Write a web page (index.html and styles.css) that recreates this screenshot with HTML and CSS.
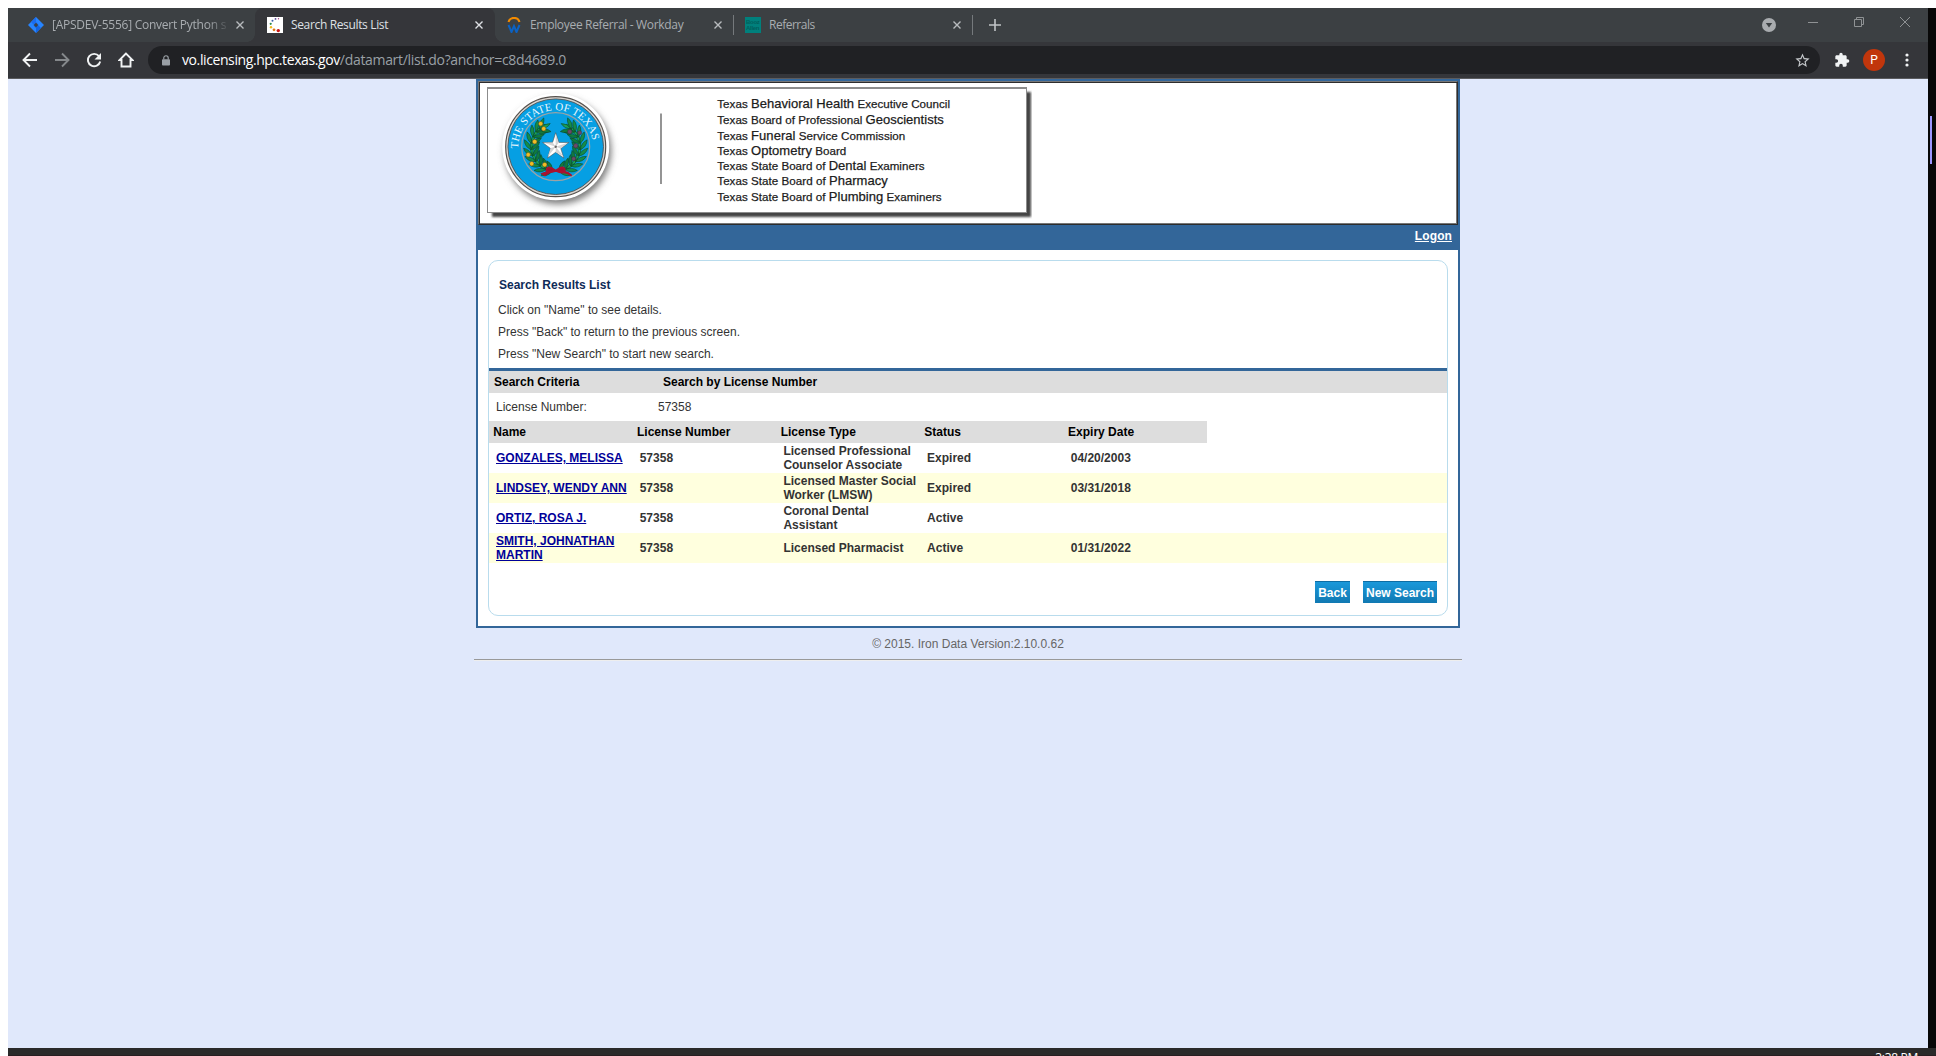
FILE: index.html
```html
<!DOCTYPE html>
<html lang="en">
<head>
<meta charset="utf-8">
<title>Search Results List</title>
<link rel="stylesheet" href="styles.css">
</head>
<body>
<div class="desktop">
  <div class="screen">
    <div class="window">
      <div class="tabstrip">
        <div class="tab tab-first">
          <svg class="favicon" viewBox="0 0 16 16"><path d="M8 0l8 8-8 8-8-8z" fill="#2684ff"/><path d="M8 0L3 5l5 5 2.500-2.500L8 5z" fill="#1a6cf0"/><path d="M8 16l5-5-5-5-2.500 2.500L8 11z" fill="#1464e0"/><path d="M8 5.800L10.200 8 8 10.200 5.800 8z" fill="#3c4043"/></svg>
          <span class="tab-title fade t1">[APSDEV-5556] Convert Python s</span>
          <svg class="close" viewBox="0 0 8 8"><path d="M.5.5l7 7M7.500.5l-7 7"/></svg>
        </div>
        <div class="tab tab-active">
          <svg class="favicon" viewBox="0 0 16 16"><path fill="#fff" d="M0 0h16v16H0z"/><circle cx="11.500" cy="1.700" r=".7" fill="#a04080"/><circle cx="8.500" cy="1.900" r=".9" fill="#5a4a9a"/><circle cx="5.500" cy="3.700" r="1" fill="#3c5fa8"/><circle cx="3.700" cy="6.800" r="1.100" fill="#2b8a4a"/><circle cx="4" cy="10.200" r="1.200" fill="#f2b81c"/><circle cx="7" cy="12.800" r="1.400" fill="#e07418"/><circle cx="11.300" cy="13.600" r="1.700" fill="#c81414"/></svg>
          <span class="tab-title t2">Search Results List</span>
          <svg class="close" viewBox="0 0 8 8"><path d="M.5.5l7 7M7.500.5l-7 7"/></svg>
        </div>
        <div class="tab tab-third">
          <svg class="favicon" viewBox="0 0 16 16" fill="none"><path d="M2.500 5C4 -.5 12-.5 13.500 5" stroke="#f38b00" stroke-width="2"/><path d="M2.500 8l3 7L8 9l2.500 6 3-7" stroke="#0b62c4" stroke-width="2"/></svg>
          <span class="tab-title t3">Employee Referral - Workday</span>
          <svg class="close" viewBox="0 0 8 8"><path d="M.5.5l7 7M7.500.5l-7 7"/></svg>
        </div>
        <div class="tab tab-fourth">
          <span class="favicon teal">Booz<br>Allen</span>
          <span class="tab-title t4">Referrals</span>
          <svg class="close" viewBox="0 0 8 8"><path d="M.5.5l7 7M7.500.5l-7 7"/></svg>
        </div>
        <svg class="plus" viewBox="0 0 12 12"><path d="M6 0v12M0 6h12"/></svg>
        <div class="win-controls">
          <svg class="drop" viewBox="0 0 14 14"><circle cx="7" cy="7" r="7" fill="#a9acaf"/><path d="M3.800 5h6.400L7 9.500z" fill="#3c4043"/></svg>
          <svg class="wc" viewBox="0 0 10 10"><path d="M0 5.500h10"/></svg>
          <svg class="wc" viewBox="0 0 10 10"><path d="M.5 2.500h7v7h-7zM2.500 2.500v-2h7v7h-2"/></svg>
          <svg class="wc" viewBox="0 0 10 10"><path d="M0 0l10 10M10 0L0 10"/></svg>
        </div>
      </div>
      <div class="toolbar">
        <svg class="nav" viewBox="0 0 16 16"><path d="M15 8H2M8 1.500L1.500 8 8 14.500"/></svg>
        <svg class="nav dim" viewBox="0 0 16 16"><path d="M1 8h13M8 1.500L14.500 8 8 14.500"/></svg>
        <svg class="nav" viewBox="0 0 16 16"><path d="M13 4.200A6.200 6.200 0 1 0 14.200 9.500"/><path d="M15 1v6.500H8.500z" fill="#f1f3f4" stroke="none"/></svg>
        <svg class="nav" viewBox="0 0 16 16"><path d="M8 1.500L1.500 8h2v6.500h9V8h2z"/></svg>
        <div class="omnibox">
          <svg class="lock" viewBox="0 0 9 12"><path d="M2 5V3.200a2.500 2.500 0 0 1 5 0V5" fill="none" stroke="#9aa0a6" stroke-width="1.300"/><rect x="0" y="4.500" width="9" height="7" rx="1" fill="#9aa0a6"/></svg>
          <span class="url"><span class="host">vo.licensing.hpc.texas.gov</span><span class="path">/datamart/list.do?anchor=c8d4689.0</span></span>
          <svg class="star" viewBox="0 0 24 24"><path d="M22 9.240l-7.190-.62L12 2 9.190 8.630 2 9.240l5.460 4.730L5.820 21 12 17.270 18.180 21l-1.630-7.030L22 9.240zM12 15.400l-3.760 2.270 1-4.280-3.320-2.880 4.380-.38L12 6.100l1.710 4.040 4.380.38-3.320 2.880 1 4.280L12 15.400z"/></svg>
        </div>
        <svg class="puzzle" viewBox="0 0 24 24"><path d="M20.500 11H19V7c0-1.100-.9-2-2-2h-4V3.500a2.500 2.500 0 0 0-5 0V5H4c-1.100 0-2 .9-2 2v3.800h1.500a2.700 2.700 0 0 1 0 5.400H2V20c0 1.100.9 2 2 2h3.800v-1.500a2.700 2.700 0 0 1 5.400 0V22H17c1.100 0 2-.9 2-2v-4h1.500a2.500 2.500 0 0 0 0-5z"/></svg>
        <span class="avatar">P</span>
        <svg class="dots" viewBox="0 0 4 14"><circle cx="2" cy="2" r="1.600"/><circle cx="2" cy="7" r="1.600"/><circle cx="2" cy="12" r="1.600"/></svg>
      </div>
      <div class="page">
        <main class="site">
          <header class="banner">
            <svg class="banner-art" width="552" height="140" viewBox="480 83 552 140">
              <defs>
                <filter id="soft" x="-20%" y="-20%" width="150%" height="150%"><feGaussianBlur stdDeviation="1.200"/></filter>
                <filter id="softer" x="-30%" y="-30%" width="160%" height="160%"><feGaussianBlur stdDeviation="3.500"/></filter>
                <path id="arc" d="M-37.500 6V1A37.500 37.500 0 0 1 37.500 1V12"/>
                <g id="sprig" stroke="#0b4022" stroke-width=".5">
                  <path d="M0 5Q-3-1 0-6Q3-1 0 5z" fill="#1aa156"/>
                  <path d="M0 6Q-7 4-8-3Q-2-1 0 6z" fill="#158c4a"/>
                  <path d="M0 6Q7 4 7.500-3Q2-1 0 6z" fill="#117a3e"/>
                </g>
                <g id="branch">
                  <use href="#sprig" transform="rotate(-68) translate(-24 0)"/>
                  <use href="#sprig" transform="rotate(-53) translate(-24 0)"/>
                  <use href="#sprig" transform="rotate(-38) translate(-24 0)"/>
                  <use href="#sprig" transform="rotate(-23) translate(-24 0)"/>
                  <use href="#sprig" transform="rotate(-8) translate(-24 0)"/>
                  <use href="#sprig" transform="rotate(7) translate(-24 0)"/>
                  <use href="#sprig" transform="rotate(22) translate(-24 0)"/>
                  <use href="#sprig" transform="rotate(37) translate(-24 0)"/>
                  <use href="#sprig" transform="rotate(51) translate(-24 0)"/>
                  <use href="#sprig" transform="rotate(62) translate(-23 0)"/>
                </g>
              </defs>
              <path d="M492 92h539v125H492z" fill="#444" filter="url(#soft)"/>
              <path d="M487 87h540v126H487z" fill="#8c8c8c"/>
              <path d="M488 89h538v123H488z" fill="#fff"/>
              <circle cx="558" cy="151" r="53" fill="#777" filter="url(#softer)"/>
              <g transform="translate(555.700 146.700)">
                <circle r="53.500" fill="#fff"/>
                <circle r="50" fill="#d8d4cf" stroke="#55504c" stroke-width="1.200"/>
                <circle r="47.800" fill="#069fe3" stroke="#555" stroke-width=".9"/>
                <circle r="34" fill="none" stroke="#9ba3a5" stroke-width="1.200"/>
                <text class="seal-text" fill="#e9f6fc"><textPath href="#arc" startOffset="4">THE STATE OF TEXAS</textPath></text>
                <use href="#branch"/>
                <use href="#branch" transform="scale(-1 1)"/>
                <g fill="#f0bc25" stroke="#69551a" stroke-width=".5">
                  <circle cx="-15" cy="-23" r="2.200"/><circle cx="-12" cy="-18" r="2.200"/><circle cx="-21" cy="-5" r="2.300"/><circle cx="-27.500" cy="8" r="2.200"/><circle cx="-24" cy="17" r="2.200"/><circle cx="-11" cy="18" r="2.300"/>
                </g>
                <g fill="#6b4a66" stroke="#3a2838" stroke-width=".4">
                  <circle cx="14" cy="-15" r="2.200"/><circle cx="24" cy="-14" r="2"/><circle cx="20" cy="-1" r="2.200"/><circle cx="18" cy="12" r="2"/>
                </g>
                <path d="M0 24q-8-6-9-1q0 4 9 1q9 4 9-1q-1-5-9 1zM-2 24l-11 3 3 2M2 24l10 2 4 3" fill="#9c1230" stroke="#a8122f" stroke-width="2"/>
                <path d="M0-14l3.100 9.700 10 .1-8 6 3 9.600L0 5.600l-8.100 5.800 3-9.600-8-6 10-.1z" fill="#fff" stroke="#555" stroke-width=".6"/>
                <path d="M0 0v-13L3-4zM0 0l12-4-7 5.800zM0 0l8 10-8-4.600zM0 0l-8 10 3-8.600zM0 0l-12-4 9-.2z" fill="#d4d4d4"/>
                <circle r="1.200" fill="#666"/>
              </g>
              <path d="M661 113.500v70.500" stroke="#828282" stroke-width="1.700"/>
              <g class="boards">
                <text x="717.300" y="108.300" textLength="232.700">Texas <tspan class="lg">Behavioral Health</tspan> Executive Council</text>
                <text x="717.300" y="123.600" textLength="226.500">Texas Board of Professional <tspan class="lg">Geoscientists</tspan></text>
                <text x="717.300" y="139.500" textLength="188">Texas <tspan class="lg">Funeral</tspan> Service Commission</text>
                <text x="717.300" y="154.600" textLength="129">Texas <tspan class="lg">Optometry</tspan> Board</text>
                <text x="717.300" y="169.700" textLength="207.300">Texas State Board of <tspan class="lg">Dental</tspan> Examiners</text>
                <text x="717.300" y="185" textLength="170.500">Texas State Board of <tspan class="lg">Pharmacy</tspan></text>
                <text x="717.300" y="201" textLength="224.300">Texas State Board of <tspan class="lg">Plumbing</tspan> Examiners</text>
              </g>
            </svg>
          </header>
          <nav class="logon-bar"><a href="#">Logon</a></nav>
          <section class="panel">
            <div class="intro">
              <h1>Search Results List</h1>
              <p>Click on "Name" to see details.</p>
              <p>Press "Back" to return to the previous screen.</p>
              <p>Press "New Search" to start new search.</p>
            </div>
            <div class="criteria-head"><span>Search Criteria</span><span>Search by License Number</span></div>
            <div class="criteria-row"><span>License Number:</span><span>57358</span></div>
            <div class="results-head row"><span>Name</span><span>License Number</span><span>License Type</span><span>Status</span><span>Expiry Date</span></div>
            <div class="row result"><a href="#">GONZALES, MELISSA</a><span>57358</span><span>Licensed Professional Counselor Associate</span><span>Expired</span><span>04/20/2003</span></div>
            <div class="row result alt"><a href="#">LINDSEY, WENDY ANN</a><span>57358</span><span>Licensed Master Social Worker (LMSW)</span><span>Expired</span><span>03/31/2018</span></div>
            <div class="row result"><a href="#">ORTIZ, ROSA J.</a><span>57358</span><span>Coronal Dental<br>Assistant</span><span>Active</span><span></span></div>
            <div class="row result alt"><a href="#">SMITH, JOHNATHAN MARTIN</a><span>57358</span><span>Licensed Pharmacist</span><span>Active</span><span>01/31/2022</span></div>
            <div class="actions"><button class="back">Back</button><button class="new">New Search</button></div>
          </section>
        </main>
        <footer class="copyright">© 2015. Iron Data Version:2.10.0.62</footer>
      </div>
    </div>
    <div class="edge"><div class="edge-mark"></div></div>
  </div>
  <div class="taskbar"><span class="clock">3:38 PM</span></div>
</div>
</body>
</html>
```
FILE: styles.css
```css
* { box-sizing: border-box; }
body { margin: 0; background: #fff; overflow: hidden; }
.desktop { width: 1936px; height: 1056px; padding: 8px 0 0 8px; display: flex; flex-direction: column; overflow: hidden; }
.screen { display: flex; height: 1040px; }
.window { width: 1920px; display: flex; flex-direction: column; }
.edge { width: 8px; background: #080808; padding: 108px 0 0 2px; }
.edge-mark { width: 2px; height: 48px; background: #9c96ff; }
.taskbar { height: 8px; background: #2a2a2a; border-bottom: 1px solid #281e21; display: flex; justify-content: flex-end; padding: 2px 18px 0 0; }
.clock { font: 12px/16px "Open Sans", sans-serif; color: #fff; letter-spacing: -.3px; }

/* browser chrome */
.tabstrip { height: 34px; background: #3c4043; display: flex; align-items: center; font: 12px/16px "Open Sans", sans-serif; color: #a9adb1; }
.tab { height: 34px; display: flex; align-items: center; flex: none; }
.tab-first { width: 247px; padding: 0 11px 0 20px; }
.tab-active { width: 240px; padding: 0 12px; background: #35363a; color: #dfe1e5; border-radius: 8px 8px 0 0; position: relative; }
.tab-active::before, .tab-active::after { content: ""; position: absolute; bottom: 0; width: 8px; height: 8px; }
.tab-active::before { left: -8px; background: radial-gradient(circle at 0 0, #3c4043 7.5px, #35363a 8px); }
.tab-active::after { right: -8px; background: radial-gradient(circle at 100% 0, #3c4043 7.5px, #35363a 8px); }
.tab-third { width: 239px; padding: 0 12px 0 11px; }
.tab-fourth { width: 239px; padding: 0 12px 0 11px; }
.tab-third, .tab-fourth { background: linear-gradient(#75797c, #75797c) right center / 1px 20px no-repeat; }
.favicon { width: 16px; height: 16px; flex: none; margin-right: 8px; }
.teal { background: #00807c; color: #005f5c; font: bold 6px/6px "Liberation Sans", sans-serif; padding: 2px 1px; overflow: hidden; letter-spacing: -.3px; }
.tab-title { flex: 1; white-space: nowrap; overflow: hidden; }
.t1 { letter-spacing: -.25px; }
.t2 { letter-spacing: -.35px; }
.t3 { letter-spacing: -.32px; }
.t4 { letter-spacing: -.5px; }
.fade { -webkit-mask-image: linear-gradient(90deg, #000 155px, transparent 179px); mask-image: linear-gradient(90deg, #000 155px, transparent 179px); }
.close { width: 8px; height: 8px; flex: none; stroke: #b8bbbe; stroke-width: 1.4; }
.tab-active .close { stroke: #dfe1e5; }
.plus { width: 12px; height: 12px; margin-left: 16px; stroke: #c0c3c6; stroke-width: 1.6; flex: none; }
.win-controls { margin-left: auto; display: flex; align-items: center; padding-right: 18px; }
.drop { width: 14px; height: 14px; margin-right: 32px; }
.wc { width: 10px; height: 10px; margin-bottom: 6px; fill: none; stroke: #8f9294; overflow: visible; }
.wc + .wc { margin-left: 36px; }
.toolbar { height: 37px; background: #35363a; border-bottom: 1px solid #5b5c5f; display: flex; align-items: center; padding: 0 19px 0 14px; }
.nav { width: 16px; height: 16px; margin-right: 16px; fill: none; stroke: #f1f3f4; stroke-width: 1.9; flex: none; }
.dim { stroke: #85888b; }
.omnibox { width: 1672px; height: 28px; margin-left: -2px; border-radius: 14px; background: #202124; display: flex; align-items: center; padding: 0 9px 0 14px; flex: none; }
.lock { width: 8px; height: 11px; margin-right: 12px; }
.url { flex: 1; font: 14px/20px "Open Sans", sans-serif; color: #9aa0a6; white-space: nowrap; }
.host { color: #fff; letter-spacing: -.4px; }
.path { letter-spacing: -.32px; }
.star { width: 17px; height: 17px; fill: #c4c7ca; }
.puzzle { width: 16px; height: 16px; margin-left: 14px; fill: #f1f3f4; flex: none; }
.avatar { width: 22px; height: 22px; margin-left: 13px; border-radius: 50%; background: #c1360c; color: #fff; font: 12px/22px Roboto, sans-serif; text-align: center; flex: none; }
.dots { width: 4px; height: 14px; margin-left: auto; fill: #f1f3f4; }

/* page */
.page { flex: 1; background: #e0e8fb; font: 12px/14px "Liberation Sans", Arial, sans-serif; color: #333; }
.site { width: 984px; margin-left: 468px; border: 2px solid #369; background: #fff; }
.banner { height: 144px; padding: 1px; border: 1px solid; border-color: #777 #2d2d2d #2d2d2d #777; box-shadow: inset 1px 1px #2d2d2d, inset -1px -1px #777; }
.banner-art { display: block; }
.seal-text { font: 11px "Liberation Serif", serif; }
.boards { font-size: 11.6px; fill: #111; }
.boards text { stroke: #333; stroke-width: .25px; }
.lg { font-size: 13px; }
.logon-bar { height: 25px; background: #369; text-align: right; padding: 4px 6px 0; font-weight: bold; }
.logon-bar a { color: #fff; letter-spacing: .1px; }
.panel { height: 356px; margin: 10px 10px 10px; border: 1px solid #b9dced; border-radius: 10px; display: flex; flex-direction: column; }
.intro { height: 107px; padding: 16px 0 0 9px; }
.intro h1 { margin: 0 0 5px 1px; font-size: 12px; line-height: 17px; color: #0f2b57; }
.intro p { margin: 0; line-height: 22px; }
.criteria-head { border-top: 3px solid #369; background: #ddd; height: 25px; display: flex; padding-left: 5px; font-weight: bold; color: #000; line-height: 22px; flex: none; }
.criteria-head span:first-child { width: 169px; }
.criteria-row { height: 28px; display: flex; padding-left: 7px; line-height: 28px; flex: none; }
.criteria-row span:first-child { width: 162px; }
.row { display: grid; grid-template-columns: repeat(5, 143.7px); align-items: center; font-weight: bold; flex: none; }
.results-head { width: 718px; height: 22px; background: #ddd; color: #000; padding-left: 4.3px; overflow: hidden; }
.result { height: 30px; padding-left: 7px; }
.result > * { padding-right: 8px; }
.result a { color: #009; }
.alt { background: #ffffde; }
.actions { display: flex; justify-content: flex-end; padding: 18px 10px 0 0; gap: 13px; }
.actions button { height: 22px; padding: 0; border: 0; border-top: 1px solid #0e6da3; background: linear-gradient(#1b98da, #1079b2); color: #fff; font: bold 12px/20px "Liberation Sans", Arial, sans-serif; }
.back { width: 35px; }
.new { width: 74px; }
.copyright { width: 988px; margin-left: 466px; height: 32px; text-align: center; line-height: 33px; color: #666; border-bottom: 1px solid #999; box-shadow: 0 1px #eee; }
```
